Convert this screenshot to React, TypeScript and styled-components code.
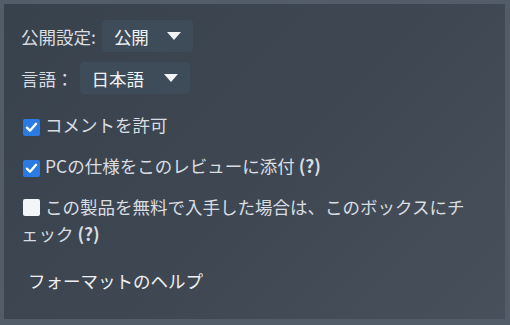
import React from "react";
import styled, { createGlobalStyle } from "styled-components";

const GlobalStyle = createGlobalStyle`
  html, body {
    margin: 0;
    padding: 0;
    background: #535d69;
  }
  body {
    font-family: "Noto Sans CJK JP", "Noto Sans", "Liberation Sans", sans-serif;
  }
`;

const Frame = styled.div`
  width: 510px;
  height: 325px;
  box-sizing: border-box;
  padding: 4px 5px 6px 4px;
  background: #535d69;
`;

const Panel = styled.div`
  height: 100%;
  box-sizing: border-box;
  padding: 16px 17px;
  background: linear-gradient(135deg, #38424c 0%, #3f4852 55%, #48505b 100%);
  color: #d9dde2;
  font-size: 17.5px;
  line-height: 27px;
  display: flex;
  flex-direction: column;
`;

const SelectRow = styled.div<{ $gap: number; $mt?: number }>`
  display: flex;
  align-items: center;
  gap: ${(p) => p.$gap}px;
  margin-top: ${(p) => p.$mt ?? 0}px;
`;

const Label = styled.span`
  white-space: nowrap;
`;

const Dropdown = styled.div<{ $w: number }>`
  width: ${(p) => p.$w}px;
  height: 32px;
  box-sizing: border-box;
  padding: 0 12px 0 12px;
  display: flex;
  align-items: center;
  justify-content: space-between;
  background: #3e4b58;
  border-radius: 4px;
  color: #f0f2f5;
  font-weight: 400;
`;

const Caret = styled.span`
  width: 0;
  height: 0;
  border-left: 7px solid transparent;
  border-right: 7px solid transparent;
  border-top: 8px solid #f2f4f6;
`;

const CheckRow = styled.label<{ $mt: number }>`
  display: block;
  margin-top: ${(p) => p.$mt}px;
  padding-left: 2px;
`;

const Box = styled.span<{ $checked: boolean }>`
  display: inline-flex;
  align-items: center;
  justify-content: center;
  width: 17px;
  height: 17px;
  margin-right: 5px;
  vertical-align: -2px;
  border-radius: 2px;
  background: ${(p) => (p.$checked ? "#2a7be4" : "#f4f5f6")};
`;

const Help = styled.span`
  font-weight: 700;
`;

const HelpLink = styled.div`
  margin-top: 20px;
  padding-left: 7px;
  color: #eef0f3;
`;

const Wrap = styled.span`
  display: block;
  margin-left: -2px;
`;

function Check({ checked }: { checked: boolean }) {
  return (
    <Box $checked={checked}>
      {checked && (
        <svg width="13" height="13" viewBox="0 0 12 12">
          <path
            d="M1.8 6.2 L4.6 9 L10.2 2.6"
            fill="none"
            stroke="#ffffff"
            strokeWidth="2.2"
            strokeLinecap="round"
            strokeLinejoin="round"
          />
        </svg>
      )}
    </Box>
  );
}

export default function App() {
  return (
    <>
      <GlobalStyle />
      <Frame>
        <Panel>
          <SelectRow $gap={6}>
            <Label>公開設定:</Label>
            <Dropdown $w={91}>
              公開
              <Caret />
            </Dropdown>
          </SelectRow>
          <SelectRow $gap={6} $mt={10}>
            <Label>言語：</Label>
            <Dropdown $w={110}>
              日本語
              <Caret />
            </Dropdown>
          </SelectRow>
          <CheckRow $mt={17}>
            <Check checked />
            コメントを許可
          </CheckRow>
          <CheckRow $mt={14}>
            <Check checked />
            PCの仕様をこのレビューに添付 <Help>(?)</Help>
          </CheckRow>
          <CheckRow $mt={14}>
            <Check checked={false} />
            この製品を無料で入手した場合は、このボックスにチ
            <Wrap>
              ェック <Help>(?)</Help>
            </Wrap>
          </CheckRow>
          <HelpLink>フォーマットのヘルプ</HelpLink>
        </Panel>
      </Frame>
    </>
  );
}
